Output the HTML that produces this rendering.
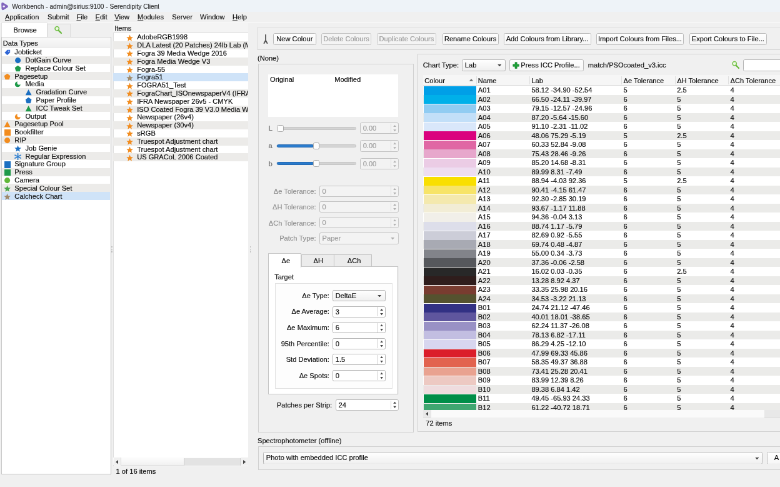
<!DOCTYPE html><html><head><meta charset="utf-8"><title>Workbench</title><style>
*{box-sizing:border-box;margin:0;padding:0}
html,body{width:780px;height:487px;overflow:hidden;background:#f0f0f0}
body{font-family:"Liberation Sans",sans-serif;font-size:11.12px;color:#111;-webkit-text-stroke:0.192px #111;position:relative;line-height:1}
.a{position:absolute;white-space:nowrap}
.t{position:absolute;white-space:nowrap;height:14.4px;line-height:14.4px}
.btn{position:absolute;border:1px solid #bcbcbc;background:linear-gradient(#ffffff,#f6f6f6);border-radius:2.4px;text-align:center;white-space:nowrap;height:18.88px;line-height:17.28px}
.btn.dis{color:#9c9c9c;-webkit-text-stroke-color:#9c9c9c;border-color:#c4c4c4;background:#f4f4f4}
.inp{position:absolute;border:1px solid #b6b6b6;background:#fff;border-radius:2.4px;height:17.6px;line-height:14.4px;padding-left:3.68px;white-space:nowrap}
.inp.dis{color:#a0a0a0;-webkit-text-stroke-color:#a0a0a0;border-color:#c2c2c2;background:#f3f3f3}
.lbl{position:absolute;text-align:right;white-space:nowrap;height:14.4px;line-height:14.4px}
.lbl.dis{color:#909090;-webkit-text-stroke-color:#909090}
.row{position:absolute;left:0;right:0;white-space:nowrap}
u{text-decoration-thickness:0.8px;text-underline-offset:0.96px;text-decoration-color:#666}
</style></head><body><div id="w" style="position:absolute;left:0;top:0;width:1248.0px;height:779.2px;transform:scale(0.625);transform-origin:0 0;will-change:transform;overflow:hidden">
<div class="a" style="left:0;top:0;width:1248px;height:19.52px;background:#eef3f8"></div>
<svg class="a" style="left:-0.16px;top:3.36px" width="13.760" height="13.760" viewBox="0 0 16 16"><path d="M5 3.8 L12.6 8.4 L5.4 12.8 Z" fill="#8166bd" stroke="#8166bd" stroke-width="5" stroke-linejoin="round"/><circle cx="7.2" cy="8.4" r="1.9" fill="#f3f0fa"/></svg>
<div class="a" style="left:19.2px;top:5.76px;font-size:10.16px;color:#454545;letter-spacing:0px">Workbench - admin@sirius:9100 - Serendipity Client</div>
<div class="a" style="left:0;top:19.2px;width:1248px;height:16.64px;background:#f0f0f0;border-bottom:1px solid #fcfcfc"></div>
<div class="t" style="left:8px;top:19.68px"><u>A</u>pplication</div>
<div class="t" style="left:76px;top:19.68px">Submit</div>
<div class="t" style="left:122.4px;top:19.68px"><u>F</u>ile</div>
<div class="t" style="left:152.48px;top:19.68px"><u>E</u>dit</div>
<div class="t" style="left:183.2px;top:19.68px"><u>V</u>iew</div>
<div class="t" style="left:220px;top:19.68px"><u>M</u>odules</div>
<div class="t" style="left:275.2px;top:19.68px">Server</div>
<div class="t" style="left:320px;top:19.68px">Window</div>
<div class="t" style="left:372px;top:19.68px"><u>H</u>elp</div>
<div class="a" style="left:1.6px;top:36px;width:74.4px;height:24.8px;background:#fff;border:1px solid #e2e2e2;border-bottom:none"></div>
<div class="t" style="left:21.6px;top:40.8px">Browse</div>
<div class="a" style="left:75.68px;top:38.08px;width:37.44px;height:21.44px;background:#eeeeee;border:1px solid #dedede;border-bottom:none"></div>
<svg class="a" style="left:85.6px;top:40.8px" width="14.400" height="14.400" viewBox="0 0 18 18"><circle cx="6.5" cy="6" r="4" fill="#eef9e2" stroke="#74c24a" stroke-width="1.9"/><path d="M9.5 9.5 L15 15" stroke="#68ba3c" stroke-width="2.8" stroke-linecap="round"/></svg>
<div class="a" style="left:1.6px;top:58.56px;width:176px;height:700.64px;background:#fff;border:1px solid #d4d4d4;border-right:1.44px solid #b4b4b4;border-bottom:1.28px solid #c0c0c0;border-left:1.28px solid #c8c8c8"></div>
<div class="a" style="left:3.2px;top:60.16px;width:172.8px;height:15.84px;background:linear-gradient(#fafafa,#f0f0f0);border-bottom:1px solid #dcdcdc"></div>
<div class="t" style="left:4.8px;top:61.92px">Data Types</div>
<svg class="a" style="left:5.6px;top:78.24px" width="11.200" height="11.200" viewBox="0 0 16 16"><path d="M2 9 L8 2.5 L14.5 2.5 L14.5 8.5 L8 14.5 Z" fill="#2f66d6"/><circle cx="11.5" cy="5.5" r="1.3" fill="#fff"/></svg>
<div class="t" style="left:23.36px;top:77.12px;height:12.8px;line-height:12.8px">Jobticket</div>
<div class="a" style="left:3.2px;top:89.6px;width:172.8px;height:12.8px;background:#ecebe9"></div>
<svg class="a" style="left:22.72px;top:91.04px" width="11.200" height="11.200" viewBox="0 0 16 16"><circle cx="8" cy="8" r="6.5" fill="#1b6fc2"/></svg>
<div class="t" style="left:40.48px;top:89.92px;height:12.8px;line-height:12.8px">DotGain Curve</div>
<svg class="a" style="left:22.72px;top:103.84px" width="11.200" height="11.200" viewBox="0 0 16 16"><path d="M8 1 L15 6.2 L12.4 14.5 L3.6 14.5 L1 6.2 Z" fill="#1f9a4a"/></svg>
<div class="t" style="left:40.48px;top:102.72px;height:12.8px;line-height:12.8px">Replace Colour Set</div>
<div class="a" style="left:3.2px;top:115.2px;width:172.8px;height:12.8px;background:#ecebe9"></div>
<svg class="a" style="left:5.6px;top:116.64px" width="11.200" height="11.200" viewBox="0 0 16 16"><path d="M8 1 L15 6.2 L12.4 14.5 L3.6 14.5 L1 6.2 Z" fill="#f28c1e"/></svg>
<div class="t" style="left:23.36px;top:115.52px;height:12.8px;line-height:12.8px">Pagesetup</div>
<svg class="a" style="left:22.72px;top:129.44px" width="11.200" height="11.200" viewBox="0 0 16 16"><circle cx="7.5" cy="8.5" r="6.3" fill="#1f9a4a"/><circle cx="10.8" cy="5" r="4.4" fill="#fff"/></svg>
<div class="t" style="left:40.48px;top:128.32px;height:12.8px;line-height:12.8px">Media</div>
<div class="a" style="left:3.2px;top:140.8px;width:172.8px;height:12.8px;background:#ecebe9"></div>
<svg class="a" style="left:39.84px;top:142.24px" width="11.200" height="11.200" viewBox="0 0 16 16"><path d="M8 1.5 L15 14.5 L1 14.5 Z" fill="#1b6fc2"/></svg>
<div class="t" style="left:57.6px;top:141.12px;height:12.8px;line-height:12.8px">Gradation Curve</div>
<svg class="a" style="left:39.84px;top:155.04px" width="11.200" height="11.200" viewBox="0 0 16 16"><path d="M8 1 L15 6.2 L12.4 14.5 L3.6 14.5 L1 6.2 Z" fill="#1b6fc2"/></svg>
<div class="t" style="left:57.6px;top:153.92px;height:12.8px;line-height:12.8px">Paper Profile</div>
<div class="a" style="left:3.2px;top:166.4px;width:172.8px;height:12.8px;background:#ecebe9"></div>
<svg class="a" style="left:39.84px;top:167.84px" width="11.200" height="11.200" viewBox="0 0 16 16"><path d="M8 1.5 L15 14.5 L1 14.5 Z" fill="#1f9a4a"/></svg>
<div class="t" style="left:57.6px;top:166.72px;height:12.8px;line-height:12.8px">ICC Tweak Set</div>
<svg class="a" style="left:22.72px;top:180.64px" width="11.200" height="11.200" viewBox="0 0 16 16"><circle cx="7.5" cy="8.5" r="6.3" fill="#f28c1e"/><circle cx="10.8" cy="5" r="4.4" fill="#fff"/></svg>
<div class="t" style="left:40.48px;top:179.52px;height:12.8px;line-height:12.8px">Output</div>
<div class="a" style="left:3.2px;top:192px;width:172.8px;height:12.8px;background:#ecebe9"></div>
<svg class="a" style="left:5.6px;top:193.44px" width="11.200" height="11.200" viewBox="0 0 16 16"><path d="M8 1.5 L15 14.5 L1 14.5 Z" fill="#f28c1e"/></svg>
<div class="t" style="left:23.36px;top:192.32px;height:12.8px;line-height:12.8px">Pagesetup Pool</div>
<svg class="a" style="left:5.6px;top:206.24px" width="11.200" height="11.200" viewBox="0 0 16 16"><rect x="1.5" y="1.5" width="20.800" height="20.800" fill="#f28c1e"/></svg>
<div class="t" style="left:23.36px;top:205.12px;height:12.8px;line-height:12.8px">Bookfilter</div>
<div class="a" style="left:3.2px;top:217.6px;width:172.8px;height:12.8px;background:#ecebe9"></div>
<svg class="a" style="left:5.6px;top:219.04px" width="11.200" height="11.200" viewBox="0 0 16 16"><circle cx="8" cy="8" r="6.5" fill="#f28c1e"/></svg>
<div class="t" style="left:23.36px;top:217.92px;height:12.8px;line-height:12.8px">RIP</div>
<svg class="a" style="left:22.72px;top:231.84px" width="11.200" height="11.200" viewBox="0 0 16 16"><path d="M8 0.8 L10.1 5.9 L15.6 6.3 L11.4 9.9 L12.7 15.2 L8 12.3 L3.3 15.2 L4.6 9.9 L0.4 6.3 L5.9 5.9 Z" fill="#1b6fc2"/></svg>
<div class="t" style="left:40.48px;top:230.72px;height:12.8px;line-height:12.8px">Job Genie</div>
<div class="a" style="left:3.2px;top:243.2px;width:172.8px;height:12.8px;background:#ecebe9"></div>
<svg class="a" style="left:22.72px;top:244.64px" width="11.200" height="11.200" viewBox="0 0 16 16"><path d="M8 1 V15 M1.5 4.5 L14.5 11.5 M1.5 11.5 L14.5 4.5" stroke="#2e7fd0" stroke-width="2.4" stroke-linecap="round" fill="none"/></svg>
<div class="t" style="left:40.48px;top:243.52px;height:12.8px;line-height:12.8px">Regular Expression</div>
<svg class="a" style="left:5.6px;top:257.44px" width="11.200" height="11.200" viewBox="0 0 16 16"><rect x="1.5" y="1.5" width="20.800" height="20.800" fill="#1b6fc2"/></svg>
<div class="t" style="left:23.36px;top:256.32px;height:12.8px;line-height:12.8px">Signature Group</div>
<div class="a" style="left:3.2px;top:268.8px;width:172.8px;height:12.8px;background:#ecebe9"></div>
<svg class="a" style="left:5.6px;top:270.24px" width="11.200" height="11.200" viewBox="0 0 16 16"><rect x="1.5" y="1.5" width="20.800" height="20.800" fill="#1f9a4a"/></svg>
<div class="t" style="left:23.36px;top:269.12px;height:12.8px;line-height:12.8px">Press</div>
<svg class="a" style="left:5.6px;top:283.04px" width="11.200" height="11.200" viewBox="0 0 16 16"><circle cx="8" cy="8" r="6.5" fill="#62b83a"/></svg>
<div class="t" style="left:23.36px;top:281.92px;height:12.8px;line-height:12.8px">Camera</div>
<div class="a" style="left:3.2px;top:294.4px;width:172.8px;height:12.8px;background:#ecebe9"></div>
<svg class="a" style="left:5.6px;top:295.84px" width="11.200" height="11.200" viewBox="0 0 16 16"><path d="M8 0.8 L10.1 5.9 L15.6 6.3 L11.4 9.9 L12.7 15.2 L8 12.3 L3.3 15.2 L4.6 9.9 L0.4 6.3 L5.9 5.9 Z" fill="#4aa64a"/></svg>
<div class="t" style="left:23.36px;top:294.72px;height:12.8px;line-height:12.8px">Special Colour Set</div>
<div class="a" style="left:3.2px;top:307.2px;width:172.8px;height:12.8px;background:#cfe3f8"></div>
<svg class="a" style="left:5.6px;top:308.64px" width="11.200" height="11.200" viewBox="0 0 16 16"><path d="M8 0.8 L10.1 5.9 L15.6 6.3 L11.4 9.9 L12.7 15.2 L8 12.3 L3.3 15.2 L4.6 9.9 L0.4 6.3 L5.9 5.9 Z" fill="#a08a6a"/></svg>
<div class="t" style="left:23.36px;top:307.52px;height:12.8px;line-height:12.8px">Calcheck Chart</div>
<div class="a" style="left:178.4px;top:393.6px;width:1.28px;height:1.28px;background:#c4c4c4"></div>
<div class="a" style="left:400.32px;top:393.6px;width:1.28px;height:1.28px;background:#c8c8c8"></div>
<div class="a" style="left:178.4px;top:396.16px;width:1.28px;height:1.28px;background:#c4c4c4"></div>
<div class="a" style="left:400.32px;top:396.16px;width:1.28px;height:1.28px;background:#c8c8c8"></div>
<div class="a" style="left:178.4px;top:398.72px;width:1.28px;height:1.28px;background:#c4c4c4"></div>
<div class="a" style="left:400.32px;top:398.72px;width:1.28px;height:1.28px;background:#c8c8c8"></div>
<div class="a" style="left:178.4px;top:401.28px;width:1.28px;height:1.28px;background:#c4c4c4"></div>
<div class="a" style="left:400.32px;top:401.28px;width:1.28px;height:1.28px;background:#c8c8c8"></div>
<div class="a" style="left:178.4px;top:403.84px;width:1.28px;height:1.28px;background:#c4c4c4"></div>
<div class="a" style="left:400.32px;top:403.84px;width:1.28px;height:1.28px;background:#c8c8c8"></div>
<div class="a" style="left:180.8px;top:36.8px;width:216px;height:708.8px;background:#fff;border-left:1px solid #e0e0e0"></div>
<div class="a" style="left:180.8px;top:36.8px;width:216px;height:16px;background:#f4f4f4;border-bottom:1px solid #dcdcdc"></div>
<div class="t" style="left:183.2px;top:38.24px">Items</div>
<div class="a" style="left:180.8px;top:53.44px;width:216px;height:208px;overflow:hidden">
<svg class="a" style="left:21.6px;top:1.28px" width="11.200" height="11.200" viewBox="0 0 16 16"><path d="M8 0.8 L10.1 5.9 L15.6 6.3 L11.4 9.9 L12.7 15.2 L8 12.3 L3.3 15.2 L4.6 9.9 L0.4 6.3 L5.9 5.9 Z" fill="#f28c1e"/></svg>
<div class="t" style="left:38.4px;top:0px;height:12.8px;line-height:12.8px">AdobeRGB1998</div>
<div class="a" style="left:0;top:12.8px;width:216px;height:12.8px;background:#ecebe9"></div>
<svg class="a" style="left:21.6px;top:14.08px" width="11.200" height="11.200" viewBox="0 0 16 16"><path d="M8 0.8 L10.1 5.9 L15.6 6.3 L11.4 9.9 L12.7 15.2 L8 12.3 L3.3 15.2 L4.6 9.9 L0.4 6.3 L5.9 5.9 Z" fill="#f28c1e"/></svg>
<div class="t" style="left:38.4px;top:12.8px;height:12.8px;line-height:12.8px">DLA Latest (20 Patches) 24lb Lab (M1)</div>
<svg class="a" style="left:21.6px;top:26.88px" width="11.200" height="11.200" viewBox="0 0 16 16"><path d="M8 0.8 L10.1 5.9 L15.6 6.3 L11.4 9.9 L12.7 15.2 L8 12.3 L3.3 15.2 L4.6 9.9 L0.4 6.3 L5.9 5.9 Z" fill="#f28c1e"/></svg>
<div class="t" style="left:38.4px;top:25.6px;height:12.8px;line-height:12.8px">Fogra 39 Media Wedge 2016</div>
<div class="a" style="left:0;top:38.4px;width:216px;height:12.8px;background:#ecebe9"></div>
<svg class="a" style="left:21.6px;top:39.68px" width="11.200" height="11.200" viewBox="0 0 16 16"><path d="M8 0.8 L10.1 5.9 L15.6 6.3 L11.4 9.9 L12.7 15.2 L8 12.3 L3.3 15.2 L4.6 9.9 L0.4 6.3 L5.9 5.9 Z" fill="#f28c1e"/></svg>
<div class="t" style="left:38.4px;top:38.4px;height:12.8px;line-height:12.8px">Fogra Media Wedge V3</div>
<svg class="a" style="left:21.6px;top:52.48px" width="11.200" height="11.200" viewBox="0 0 16 16"><path d="M8 0.8 L10.1 5.9 L15.6 6.3 L11.4 9.9 L12.7 15.2 L8 12.3 L3.3 15.2 L4.6 9.9 L0.4 6.3 L5.9 5.9 Z" fill="#f28c1e"/></svg>
<div class="t" style="left:38.4px;top:51.2px;height:12.8px;line-height:12.8px">Fogra-55</div>
<div class="a" style="left:0;top:64px;width:216px;height:12.8px;background:#cfe3f8"></div>
<svg class="a" style="left:21.6px;top:65.28px" width="11.200" height="11.200" viewBox="0 0 16 16"><path d="M8 0.8 L10.1 5.9 L15.6 6.3 L11.4 9.9 L12.7 15.2 L8 12.3 L3.3 15.2 L4.6 9.9 L0.4 6.3 L5.9 5.9 Z" fill="#a08a6a"/></svg>
<div class="t" style="left:38.4px;top:64px;height:12.8px;line-height:12.8px">Fogra51</div>
<svg class="a" style="left:21.6px;top:78.08px" width="11.200" height="11.200" viewBox="0 0 16 16"><path d="M8 0.8 L10.1 5.9 L15.6 6.3 L11.4 9.9 L12.7 15.2 L8 12.3 L3.3 15.2 L4.6 9.9 L0.4 6.3 L5.9 5.9 Z" fill="#f28c1e"/></svg>
<div class="t" style="left:38.4px;top:76.8px;height:12.8px;line-height:12.8px">FOGRA51_Test</div>
<div class="a" style="left:0;top:89.6px;width:216px;height:12.8px;background:#ecebe9"></div>
<svg class="a" style="left:21.6px;top:90.88px" width="11.200" height="11.200" viewBox="0 0 16 16"><path d="M8 0.8 L10.1 5.9 L15.6 6.3 L11.4 9.9 L12.7 15.2 L8 12.3 L3.3 15.2 L4.6 9.9 L0.4 6.3 L5.9 5.9 Z" fill="#f28c1e"/></svg>
<div class="t" style="left:38.4px;top:89.6px;height:12.8px;line-height:12.8px">FograChart_ISOnewspaperV4 (IFRA26)</div>
<svg class="a" style="left:21.6px;top:103.68px" width="11.200" height="11.200" viewBox="0 0 16 16"><path d="M8 0.8 L10.1 5.9 L15.6 6.3 L11.4 9.9 L12.7 15.2 L8 12.3 L3.3 15.2 L4.6 9.9 L0.4 6.3 L5.9 5.9 Z" fill="#f28c1e"/></svg>
<div class="t" style="left:38.4px;top:102.4px;height:12.8px;line-height:12.8px">IFRA Newspaper 26v5 - CMYK</div>
<div class="a" style="left:0;top:115.2px;width:216px;height:12.8px;background:#ecebe9"></div>
<svg class="a" style="left:21.6px;top:116.48px" width="11.200" height="11.200" viewBox="0 0 16 16"><path d="M8 0.8 L10.1 5.9 L15.6 6.3 L11.4 9.9 L12.7 15.2 L8 12.3 L3.3 15.2 L4.6 9.9 L0.4 6.3 L5.9 5.9 Z" fill="#f28c1e"/></svg>
<div class="t" style="left:38.4px;top:115.2px;height:12.8px;line-height:12.8px">ISO Coated Fogra 39 V3.0 Media Wedge</div>
<svg class="a" style="left:21.6px;top:129.28px" width="11.200" height="11.200" viewBox="0 0 16 16"><path d="M8 0.8 L10.1 5.9 L15.6 6.3 L11.4 9.9 L12.7 15.2 L8 12.3 L3.3 15.2 L4.6 9.9 L0.4 6.3 L5.9 5.9 Z" fill="#f28c1e"/></svg>
<div class="t" style="left:38.4px;top:128px;height:12.8px;line-height:12.8px">Newspaper (26v4)</div>
<div class="a" style="left:0;top:140.8px;width:216px;height:12.8px;background:#ecebe9"></div>
<svg class="a" style="left:21.6px;top:142.08px" width="11.200" height="11.200" viewBox="0 0 16 16"><path d="M8 0.8 L10.1 5.9 L15.6 6.3 L11.4 9.9 L12.7 15.2 L8 12.3 L3.3 15.2 L4.6 9.9 L0.4 6.3 L5.9 5.9 Z" fill="#f28c1e"/></svg>
<div class="t" style="left:38.4px;top:140.8px;height:12.8px;line-height:12.8px">Newspaper (30v4)</div>
<svg class="a" style="left:21.6px;top:154.88px" width="11.200" height="11.200" viewBox="0 0 16 16"><path d="M8 0.8 L10.1 5.9 L15.6 6.3 L11.4 9.9 L12.7 15.2 L8 12.3 L3.3 15.2 L4.6 9.9 L0.4 6.3 L5.9 5.9 Z" fill="#f28c1e"/></svg>
<div class="t" style="left:38.4px;top:153.6px;height:12.8px;line-height:12.8px">sRGB</div>
<div class="a" style="left:0;top:166.4px;width:216px;height:12.8px;background:#ecebe9"></div>
<svg class="a" style="left:21.6px;top:167.68px" width="11.200" height="11.200" viewBox="0 0 16 16"><path d="M8 0.8 L10.1 5.9 L15.6 6.3 L11.4 9.9 L12.7 15.2 L8 12.3 L3.3 15.2 L4.6 9.9 L0.4 6.3 L5.9 5.9 Z" fill="#f28c1e"/></svg>
<div class="t" style="left:38.4px;top:166.4px;height:12.8px;line-height:12.8px">Truespot Adjustment chart</div>
<svg class="a" style="left:21.6px;top:180.48px" width="11.200" height="11.200" viewBox="0 0 16 16"><path d="M8 0.8 L10.1 5.9 L15.6 6.3 L11.4 9.9 L12.7 15.2 L8 12.3 L3.3 15.2 L4.6 9.9 L0.4 6.3 L5.9 5.9 Z" fill="#f28c1e"/></svg>
<div class="t" style="left:38.4px;top:179.2px;height:12.8px;line-height:12.8px">Truespot Adjustment chart</div>
<div class="a" style="left:0;top:192px;width:216px;height:12.8px;background:#ecebe9"></div>
<svg class="a" style="left:21.6px;top:193.28px" width="11.200" height="11.200" viewBox="0 0 16 16"><path d="M8 0.8 L10.1 5.9 L15.6 6.3 L11.4 9.9 L12.7 15.2 L8 12.3 L3.3 15.2 L4.6 9.9 L0.4 6.3 L5.9 5.9 Z" fill="#f28c1e"/></svg>
<div class="t" style="left:38.4px;top:192px;height:12.8px;line-height:12.8px">US GRACoL 2006 Coated</div>
</div>
<div class="a" style="left:180.8px;top:732.48px;width:216px;height:12.8px;background:linear-gradient(#fdfdfd,#f2f2f2);border-bottom:1px solid #dcdcdc"></div>
<div class="a" style="left:294.4px;top:732.8px;width:90.24px;height:12.16px;background:#e3e3e3;border-left:1px solid #cfcfcf;border-right:1px solid #cfcfcf"></div>
<div class="a" style="left:181.6px;top:732.48px;width:12px;height:12.8px;background:#f0f0f0;border-right:1px solid #d8d8d8"></div>
<div class="a" style="left:384.8px;top:732.48px;width:12px;height:12.8px;background:#f0f0f0"></div>
<svg class="a" style="left:184.96px;top:735.68px" width="4.160" height="6.400" viewBox="0 0 2.6 4"><path d="M2.6 0 L0 2 L2.6 4 Z" fill="#444"/></svg>
<svg class="a" style="left:388.8px;top:735.68px" width="4.160" height="6.400" viewBox="0 0 2.6 4"><path d="M0 0 L2.6 2 L0 4 Z" fill="#444"/></svg>
<div class="t" style="left:185.6px;top:747.2px">1 of 16 items</div>
<div class="a" style="left:410.88px;top:42.88px;width:849.6px;height:37.44px;border:1px solid #dedede;border-bottom-color:#d4d4d4;border-radius:1.6px;background:#f0f0f0"></div>
<svg class="a" style="left:421.12px;top:54.72px" width="8.000" height="15.040" viewBox="0 0 10 19"><path d="M5 1 V13.5 M5 12 L1.8 18 M5 12 L8.2 18" stroke="#555" stroke-width="2.3" fill="none" stroke-linecap="round"/></svg>
<div class="btn" style="left:437.12px;top:52.8px;width:68.48px">New Colour</div>
<div class="btn dis" style="left:513.6px;top:52.8px;width:80.8px">Delete Colours</div>
<div class="btn dis" style="left:603.2px;top:52.8px;width:94.4px">Duplicate Colours</div>
<div class="btn" style="left:707.52px;top:52.8px;width:90.08px">Rename Colours</div>
<div class="btn" style="left:805.6px;top:52.8px;width:140px">Add Colours from Library...</div>
<div class="btn" style="left:953.92px;top:52.8px;width:140.16px">Import Colours from Files...</div>
<div class="btn" style="left:1102.88px;top:52.8px;width:124px">Export Colours to File...</div>
<div class="t" style="left:412px;top:85.6px">(None)</div>
<div class="a" style="left:412.96px;top:101.92px;width:249.44px;height:589.76px;border:1px solid #d0d0d0"></div>
<div class="a" style="left:428.8px;top:119.04px;width:208.32px;height:68.16px;background:#fff"></div>
<div class="t" style="left:432px;top:120px">Original</div>
<div class="t" style="left:535.2px;top:120px">Modified</div>
<div class="t" style="left:429.6px;top:198.08px;color:#8a8a8a">L</div>
<div class="a" style="left:443.2px;top:202.88px;width:126.4px;height:4.8px;background:#d4d4d4;border:1px solid #c4c4c4;border-radius:2.4px"></div>
<div class="a" style="left:443.2px;top:199.68px;width:10.56px;height:11.2px;background:#fdfdfd;border:1px solid #aaa;border-radius:2.4px"></div>
<div class="inp dis" style="left:576px;top:196.16px;width:61.76px;height:18.24px;line-height:16.64px">0.00</div><div class="a" style="left:624.96px;top:197.76px;width:0;height:15.04px;border-left:1px solid #dcdcdc"></div><svg class="a" style="left:625.76px;top:196.16px" width="11.200" height="18.240" viewBox="0 0 7 11.4"><path d="M2 4.4 L3.5 2.5 L5 4.4 Z M2 7.0 L3.5 8.9 L5 7.0 Z" fill="#b0b0b0"/></svg>
<div class="t" style="left:429.6px;top:226.32px;color:#8a8a8a">a</div>
<div class="a" style="left:443.2px;top:231.12px;width:126.4px;height:4.8px;background:#d4d4d4;border:1px solid #c4c4c4;border-radius:2.4px"></div>
<div class="a" style="left:443.2px;top:231.12px;width:58.4px;height:4.8px;background:#2a7bcc;border:1px solid #2468b0;border-radius:2.4px"></div>
<div class="a" style="left:500.8px;top:227.92px;width:10.56px;height:11.2px;background:#fdfdfd;border:1px solid #aaa;border-radius:2.4px"></div>
<div class="inp dis" style="left:576px;top:224.4px;width:61.76px;height:18.24px;line-height:16.64px">0.00</div><div class="a" style="left:624.96px;top:226px;width:0;height:15.04px;border-left:1px solid #dcdcdc"></div><svg class="a" style="left:625.76px;top:224.4px" width="11.200" height="18.240" viewBox="0 0 7 11.4"><path d="M2 4.4 L3.5 2.5 L5 4.4 Z M2 7.0 L3.5 8.9 L5 7.0 Z" fill="#b0b0b0"/></svg>
<div class="t" style="left:429.6px;top:254.56px;color:#8a8a8a">b</div>
<div class="a" style="left:443.2px;top:259.36px;width:126.4px;height:4.8px;background:#d4d4d4;border:1px solid #c4c4c4;border-radius:2.4px"></div>
<div class="a" style="left:443.2px;top:259.36px;width:58.4px;height:4.8px;background:#2a7bcc;border:1px solid #2468b0;border-radius:2.4px"></div>
<div class="a" style="left:500.8px;top:256.16px;width:10.56px;height:11.2px;background:#fdfdfd;border:1px solid #aaa;border-radius:2.4px"></div>
<div class="inp dis" style="left:576px;top:252.64px;width:61.76px;height:18.24px;line-height:16.64px">0.00</div><div class="a" style="left:624.96px;top:254.24px;width:0;height:15.04px;border-left:1px solid #dcdcdc"></div><svg class="a" style="left:625.76px;top:252.64px" width="11.200" height="18.240" viewBox="0 0 7 11.4"><path d="M2 4.4 L3.5 2.5 L5 4.4 Z M2 7.0 L3.5 8.9 L5 7.0 Z" fill="#b0b0b0"/></svg>
<div class="lbl dis" style="left:409.6px;width:96px;top:298.88px">&Delta;e Tolerance:</div>
<div class="inp dis" style="left:510.88px;top:296.64px;width:127.04px;height:18.08px;line-height:16.48px">0</div><div class="a" style="left:625.12px;top:298.24px;width:0;height:14.88px;border-left:1px solid #dcdcdc"></div><svg class="a" style="left:625.92px;top:296.64px" width="11.200" height="18.080" viewBox="0 0 7 11.3"><path d="M2 4.3500000000000005 L3.5 2.45 L5 4.3500000000000005 Z M2 6.95 L3.5 8.850000000000001 L5 6.95 Z" fill="#b0b0b0"/></svg>
<div class="lbl dis" style="left:409.6px;width:96px;top:324.24px">&Delta;H Tolerance:</div>
<div class="inp dis" style="left:510.88px;top:322px;width:127.04px;height:18.08px;line-height:16.48px">0</div><div class="a" style="left:625.12px;top:323.6px;width:0;height:14.88px;border-left:1px solid #dcdcdc"></div><svg class="a" style="left:625.92px;top:322px" width="11.200" height="18.080" viewBox="0 0 7 11.3"><path d="M2 4.3500000000000005 L3.5 2.45 L5 4.3500000000000005 Z M2 6.95 L3.5 8.850000000000001 L5 6.95 Z" fill="#b0b0b0"/></svg>
<div class="lbl dis" style="left:409.6px;width:96px;top:349.6px">&Delta;Ch Tolerance:</div>
<div class="inp dis" style="left:510.88px;top:347.36px;width:127.04px;height:18.08px;line-height:16.48px">0</div><div class="a" style="left:625.12px;top:348.96px;width:0;height:14.88px;border-left:1px solid #dcdcdc"></div><svg class="a" style="left:625.92px;top:347.36px" width="11.200" height="18.080" viewBox="0 0 7 11.3"><path d="M2 4.3500000000000005 L3.5 2.45 L5 4.3500000000000005 Z M2 6.95 L3.5 8.850000000000001 L5 6.95 Z" fill="#b0b0b0"/></svg>
<div class="lbl dis" style="left:409.6px;width:96px;top:374.4px">Patch Type:</div>
<div class="inp dis" style="left:510.88px;top:372.16px;width:127.04px;height:18.88px;line-height:17.28px;background:#f3f3f3">Paper</div><svg class="a" style="left:625.12px;top:380.16px" width="6.400" height="3.520" viewBox="0 0 5 3"><path d="M0 0 H5 L2.5 3 Z" fill="#b0b0b0"/></svg>
<div class="a" style="left:481.6px;top:407.2px;width:53.6px;height:20.8px;background:#ececec;border:1px solid #c4c4c4"></div>
<div class="a" style="left:534.4px;top:407.2px;width:60.8px;height:20.8px;background:#ececec;border:1px solid #c4c4c4"></div>
<div class="a" style="left:429.28px;top:426.4px;width:207.68px;height:204.32px;background:#fff;border:1px solid #c4c4c4"></div>
<div class="a" style="left:429.28px;top:405.28px;width:52.8px;height:23.2px;background:#fff;border:1px solid #c4c4c4;border-bottom:none"></div>
<div class="t" style="left:430.88px;width:52.8px;text-align:center;top:409.6px">&Delta;e</div>
<div class="t" style="left:482.56px;width:53.6px;text-align:center;top:410.4px">&Delta;H</div>
<div class="t" style="left:536.64px;width:60px;text-align:center;top:410.4px">&Delta;Ch</div>
<div class="t" style="left:439.2px;top:435.52px">Target</div>
<div class="a" style="left:440px;top:453.12px;width:188.16px;height:168.48px;border:1px solid #e2e2e2;background:#fdfdfd"></div>
<div class="lbl" style="left:432px;width:94.88px;top:465.76px">&Delta;e Type:</div>
<div class="inp" style="left:532.16px;top:463.52px;width:84.8px;height:18.88px;line-height:17.28px;background:linear-gradient(#ffffff,#f0f0f0)">DeltaE</div><svg class="a" style="left:604.16px;top:471.52px" width="6.400" height="3.520" viewBox="0 0 5 3"><path d="M0 0 H5 L2.5 3 Z" fill="#444"/></svg>
<div class="lbl" style="left:432px;width:94.88px;top:491.36px">&Delta;e Average:</div>
<div class="inp" style="left:532.16px;top:489.6px;width:84.8px;height:18.08px;line-height:16.48px">3</div><div class="a" style="left:604.16px;top:491.2px;width:0;height:14.88px;border-left:1px solid #d0d0d0"></div><svg class="a" style="left:604.96px;top:489.6px" width="11.200" height="18.080" viewBox="0 0 7 11.3"><path d="M2 4.3500000000000005 L3.5 2.45 L5 4.3500000000000005 Z M2 6.95 L3.5 8.850000000000001 L5 6.95 Z" fill="#444"/></svg>
<div class="lbl" style="left:432px;width:94.88px;top:516.96px">&Delta;e Maximum:</div>
<div class="inp" style="left:532.16px;top:515.2px;width:84.8px;height:18.08px;line-height:16.48px">6</div><div class="a" style="left:604.16px;top:516.8px;width:0;height:14.88px;border-left:1px solid #d0d0d0"></div><svg class="a" style="left:604.96px;top:515.2px" width="11.200" height="18.080" viewBox="0 0 7 11.3"><path d="M2 4.3500000000000005 L3.5 2.45 L5 4.3500000000000005 Z M2 6.95 L3.5 8.850000000000001 L5 6.95 Z" fill="#444"/></svg>
<div class="lbl" style="left:432px;width:94.88px;top:542.56px">95th Percentile:</div>
<div class="inp" style="left:532.16px;top:540.8px;width:84.8px;height:18.08px;line-height:16.48px">0</div><div class="a" style="left:604.16px;top:542.4px;width:0;height:14.88px;border-left:1px solid #d0d0d0"></div><svg class="a" style="left:604.96px;top:540.8px" width="11.200" height="18.080" viewBox="0 0 7 11.3"><path d="M2 4.3500000000000005 L3.5 2.45 L5 4.3500000000000005 Z M2 6.95 L3.5 8.850000000000001 L5 6.95 Z" fill="#444"/></svg>
<div class="lbl" style="left:432px;width:94.88px;top:568.16px">Std Deviation:</div>
<div class="inp" style="left:532.16px;top:566.4px;width:84.8px;height:18.08px;line-height:16.48px">1.5</div><div class="a" style="left:604.16px;top:568px;width:0;height:14.88px;border-left:1px solid #d0d0d0"></div><svg class="a" style="left:604.96px;top:566.4px" width="11.200" height="18.080" viewBox="0 0 7 11.3"><path d="M2 4.3500000000000005 L3.5 2.45 L5 4.3500000000000005 Z M2 6.95 L3.5 8.850000000000001 L5 6.95 Z" fill="#444"/></svg>
<div class="lbl" style="left:432px;width:94.88px;top:593.76px">&Delta;e Spots:</div>
<div class="inp" style="left:532.16px;top:592px;width:84.8px;height:18.08px;line-height:16.48px">0</div><div class="a" style="left:604.16px;top:593.6px;width:0;height:14.88px;border-left:1px solid #d0d0d0"></div><svg class="a" style="left:604.96px;top:592px" width="11.200" height="18.080" viewBox="0 0 7 11.3"><path d="M2 4.3500000000000005 L3.5 2.45 L5 4.3500000000000005 Z M2 6.95 L3.5 8.850000000000001 L5 6.95 Z" fill="#444"/></svg>
<div class="lbl" style="left:419.2px;width:112px;top:640.64px">Patches per Strip:</div>
<div class="inp" style="left:536.8px;top:639.04px;width:101.12px;height:17.6px;line-height:16px">24</div><div class="a" style="left:625.12px;top:640.64px;width:0;height:14.4px;border-left:1px solid #d0d0d0"></div><svg class="a" style="left:625.92px;top:639.04px" width="11.200" height="17.600" viewBox="0 0 7 11"><path d="M2 4.2 L3.5 2.3 L5 4.2 Z M2 6.8 L3.5 8.7 L5 6.8 Z" fill="#444"/></svg>
<div class="t" style="left:412px;top:697.6px">Spectrophotometer (offline)</div>
<div class="a" style="left:412.8px;top:714.4px;width:848px;height:37.6px;border:1px solid #d0d0d0"></div>
<div class="inp" style="left:421.12px;top:723.2px;width:799.36px;height:19.52px;line-height:17.92px;background:linear-gradient(#ffffff,#f0f0f0)">Photo with embedded ICC profile</div><svg class="a" style="left:1207.68px;top:731.52px" width="6.400" height="3.520" viewBox="0 0 5 3"><path d="M0 0 H5 L2.5 3 Z" fill="#444"/></svg>
<div class="btn" style="left:1226.56px;top:723.2px;width:48px;height:19.52px;line-height:16.32px;text-align:left;padding-left:11.2px">A</div>
<div class="a" style="left:668.16px;top:85.76px;width:592px;height:605.12px;border:1px solid #d0d0d0"></div>
<div class="t" style="left:676.8px;top:96.96px">Chart Type:</div>
<div class="inp" style="left:739.2px;top:94.88px;width:69.6px;height:18.72px;line-height:17.12px;background:linear-gradient(#ffffff,#f0f0f0)">Lab</div><svg class="a" style="left:796px;top:102.8px" width="6.400" height="3.520" viewBox="0 0 5 3"><path d="M0 0 H5 L2.5 3 Z" fill="#444"/></svg>
<div class="btn" style="left:814.72px;top:94.88px;width:119.36px;height:18.72px;line-height:16.48px;text-align:left;padding-left:17.6px">Press ICC Profile...</div>
<svg class="a" style="left:819.68px;top:98.88px" width="11.200" height="11.200" viewBox="0 0 14 14"><path d="M5 1 H9 V5 H13 V9 H9 V13 H5 V9 H1 V5 H5 Z" fill="#1fa33a" stroke="#0f7a25" stroke-width="0.8"/></svg>
<div class="t" style="left:940.8px;top:96.96px">match/PSOcoated_v3.icc</div>
<svg class="a" style="left:1169.6px;top:96.8px" width="14.400" height="14.400" viewBox="0 0 18 18"><circle cx="6.5" cy="6" r="4" fill="#eef9e2" stroke="#74c24a" stroke-width="1.9"/><path d="M9.5 9.5 L15 15" stroke="#68ba3c" stroke-width="2.8" stroke-linecap="round"/></svg>
<div class="inp" style="left:1188.8px;top:94.88px;width:80px;height:18.72px"></div>
<div class="a" style="left:676.8px;top:120px;width:576px;height:547.68px;background:#fff;overflow:hidden">
<div class="a" style="left:0;top:0;width:576px;height:16.64px;background:#f6f6f6;border-bottom:1px solid #dcdcdc"></div>
<div class="t" style="left:2.4px;top:1.6px">Colour</div>
<div class="t" style="left:88px;top:1.6px">Name</div>
<div class="t" style="left:173.6px;top:1.6px">Lab</div>
<div class="t" style="left:320.8px;top:1.6px">&Delta;e Tolerance</div>
<div class="t" style="left:406.4px;top:1.6px">&Delta;H Tolerance</div>
<div class="t" style="left:491.68px;top:1.6px">&Delta;Ch Tolerance</div>
<div class="a" style="left:85.28px;top:1.6px;width:0;height:13.44px;border-left:1px solid #e0e0e0"></div>
<div class="a" style="left:170.4px;top:1.6px;width:0;height:13.44px;border-left:1px solid #e0e0e0"></div>
<div class="a" style="left:317.6px;top:1.6px;width:0;height:13.44px;border-left:1px solid #e0e0e0"></div>
<div class="a" style="left:403.2px;top:1.6px;width:0;height:13.44px;border-left:1px solid #e0e0e0"></div>
<div class="a" style="left:488.48px;top:1.6px;width:0;height:13.44px;border-left:1px solid #e0e0e0"></div>
<svg class="a" style="left:73.6px;top:5.76px" width="8.000" height="4.480" viewBox="0 0 4 2.4"><path d="M0 2.4 L2 0 L4 2.4 Z" fill="#777"/></svg>
<div class="a" style="left:1.6px;top:17.84px;width:83.68px;height:13.706px;background:#009fe7"></div>
<div class="t" style="left:88px;top:17.2px;height:14.506px;line-height:14.506px">A01</div>
<div class="t" style="left:173.6px;top:17.2px;height:14.506px;line-height:14.506px">58.12 -34.90 -52.54</div>
<div class="t" style="left:320.8px;top:17.2px;height:14.506px;line-height:14.506px">5</div>
<div class="t" style="left:406.4px;top:17.2px;height:14.506px;line-height:14.506px">2.5</div>
<div class="t" style="left:491.68px;top:17.2px;height:14.506px;line-height:14.506px">4</div>
<div class="a" style="left:0;top:31.706px;width:576px;height:14.506px;background:#ebebe9"></div>
<div class="a" style="left:1.6px;top:32.346px;width:83.68px;height:13.706px;background:#00b0e9"></div>
<div class="t" style="left:88px;top:31.706px;height:14.506px;line-height:14.506px">A02</div>
<div class="t" style="left:173.6px;top:31.706px;height:14.506px;line-height:14.506px">66.50 -24.11 -39.97</div>
<div class="t" style="left:320.8px;top:31.706px;height:14.506px;line-height:14.506px">6</div>
<div class="t" style="left:406.4px;top:31.706px;height:14.506px;line-height:14.506px">5</div>
<div class="t" style="left:491.68px;top:31.706px;height:14.506px;line-height:14.506px">4</div>
<div class="a" style="left:1.6px;top:46.851px;width:83.68px;height:13.706px;background:#91ccf2"></div>
<div class="t" style="left:88px;top:46.211px;height:14.506px;line-height:14.506px">A03</div>
<div class="t" style="left:173.6px;top:46.211px;height:14.506px;line-height:14.506px">79.15 -12.57 -24.96</div>
<div class="t" style="left:320.8px;top:46.211px;height:14.506px;line-height:14.506px">6</div>
<div class="t" style="left:406.4px;top:46.211px;height:14.506px;line-height:14.506px">5</div>
<div class="t" style="left:491.68px;top:46.211px;height:14.506px;line-height:14.506px">4</div>
<div class="a" style="left:0;top:60.717px;width:576px;height:14.506px;background:#ebebe9"></div>
<div class="a" style="left:1.6px;top:61.357px;width:83.68px;height:13.706px;background:#c2dff8"></div>
<div class="t" style="left:88px;top:60.717px;height:14.506px;line-height:14.506px">A04</div>
<div class="t" style="left:173.6px;top:60.717px;height:14.506px;line-height:14.506px">87.20 -5.64 -15.60</div>
<div class="t" style="left:320.8px;top:60.717px;height:14.506px;line-height:14.506px">6</div>
<div class="t" style="left:406.4px;top:60.717px;height:14.506px;line-height:14.506px">5</div>
<div class="t" style="left:491.68px;top:60.717px;height:14.506px;line-height:14.506px">4</div>
<div class="a" style="left:1.6px;top:75.862px;width:83.68px;height:13.706px;background:#d9e7fa"></div>
<div class="t" style="left:88px;top:75.222px;height:14.506px;line-height:14.506px">A05</div>
<div class="t" style="left:173.6px;top:75.222px;height:14.506px;line-height:14.506px">91.10 -2.31 -11.02</div>
<div class="t" style="left:320.8px;top:75.222px;height:14.506px;line-height:14.506px">6</div>
<div class="t" style="left:406.4px;top:75.222px;height:14.506px;line-height:14.506px">5</div>
<div class="t" style="left:491.68px;top:75.222px;height:14.506px;line-height:14.506px">4</div>
<div class="a" style="left:0;top:89.728px;width:576px;height:14.506px;background:#ebebe9"></div>
<div class="a" style="left:1.6px;top:90.368px;width:83.68px;height:13.706px;background:#da017e"></div>
<div class="t" style="left:88px;top:89.728px;height:14.506px;line-height:14.506px">A06</div>
<div class="t" style="left:173.6px;top:89.728px;height:14.506px;line-height:14.506px">48.06 75.29 -5.19</div>
<div class="t" style="left:320.8px;top:89.728px;height:14.506px;line-height:14.506px">5</div>
<div class="t" style="left:406.4px;top:89.728px;height:14.506px;line-height:14.506px">2.5</div>
<div class="t" style="left:491.68px;top:89.728px;height:14.506px;line-height:14.506px">4</div>
<div class="a" style="left:1.6px;top:104.874px;width:83.68px;height:13.706px;background:#e067a4"></div>
<div class="t" style="left:88px;top:104.234px;height:14.506px;line-height:14.506px">A07</div>
<div class="t" style="left:173.6px;top:104.234px;height:14.506px;line-height:14.506px">60.33 52.84 -9.08</div>
<div class="t" style="left:320.8px;top:104.234px;height:14.506px;line-height:14.506px">6</div>
<div class="t" style="left:406.4px;top:104.234px;height:14.506px;line-height:14.506px">5</div>
<div class="t" style="left:491.68px;top:104.234px;height:14.506px;line-height:14.506px">4</div>
<div class="a" style="left:0;top:118.739px;width:576px;height:14.506px;background:#ebebe9"></div>
<div class="a" style="left:1.6px;top:119.379px;width:83.68px;height:13.706px;background:#e7a7cc"></div>
<div class="t" style="left:88px;top:118.739px;height:14.506px;line-height:14.506px">A08</div>
<div class="t" style="left:173.6px;top:118.739px;height:14.506px;line-height:14.506px">75.43 28.46 -9.26</div>
<div class="t" style="left:320.8px;top:118.739px;height:14.506px;line-height:14.506px">6</div>
<div class="t" style="left:406.4px;top:118.739px;height:14.506px;line-height:14.506px">5</div>
<div class="t" style="left:491.68px;top:118.739px;height:14.506px;line-height:14.506px">4</div>
<div class="a" style="left:1.6px;top:133.885px;width:83.68px;height:13.706px;background:#ebcce5"></div>
<div class="t" style="left:88px;top:133.245px;height:14.506px;line-height:14.506px">A09</div>
<div class="t" style="left:173.6px;top:133.245px;height:14.506px;line-height:14.506px">85.20 14.68 -8.31</div>
<div class="t" style="left:320.8px;top:133.245px;height:14.506px;line-height:14.506px">6</div>
<div class="t" style="left:406.4px;top:133.245px;height:14.506px;line-height:14.506px">5</div>
<div class="t" style="left:491.68px;top:133.245px;height:14.506px;line-height:14.506px">4</div>
<div class="a" style="left:0;top:147.75px;width:576px;height:14.506px;background:#ebebe9"></div>
<div class="a" style="left:1.6px;top:148.39px;width:83.68px;height:13.706px;background:#eeddf1"></div>
<div class="t" style="left:88px;top:147.75px;height:14.506px;line-height:14.506px">A10</div>
<div class="t" style="left:173.6px;top:147.75px;height:14.506px;line-height:14.506px">89.99 8.31 -7.49</div>
<div class="t" style="left:320.8px;top:147.75px;height:14.506px;line-height:14.506px">6</div>
<div class="t" style="left:406.4px;top:147.75px;height:14.506px;line-height:14.506px">5</div>
<div class="t" style="left:491.68px;top:147.75px;height:14.506px;line-height:14.506px">4</div>
<div class="a" style="left:1.6px;top:162.896px;width:83.68px;height:13.706px;background:#f9df00"></div>
<div class="t" style="left:88px;top:162.256px;height:14.506px;line-height:14.506px">A11</div>
<div class="t" style="left:173.6px;top:162.256px;height:14.506px;line-height:14.506px">88.94 -4.03 92.36</div>
<div class="t" style="left:320.8px;top:162.256px;height:14.506px;line-height:14.506px">5</div>
<div class="t" style="left:406.4px;top:162.256px;height:14.506px;line-height:14.506px">2.5</div>
<div class="t" style="left:491.68px;top:162.256px;height:14.506px;line-height:14.506px">4</div>
<div class="a" style="left:0;top:176.762px;width:576px;height:14.506px;background:#ebebe9"></div>
<div class="a" style="left:1.6px;top:177.402px;width:83.68px;height:13.706px;background:#f7e468"></div>
<div class="t" style="left:88px;top:176.762px;height:14.506px;line-height:14.506px">A12</div>
<div class="t" style="left:173.6px;top:176.762px;height:14.506px;line-height:14.506px">90.41 -4.15 61.47</div>
<div class="t" style="left:320.8px;top:176.762px;height:14.506px;line-height:14.506px">6</div>
<div class="t" style="left:406.4px;top:176.762px;height:14.506px;line-height:14.506px">5</div>
<div class="t" style="left:491.68px;top:176.762px;height:14.506px;line-height:14.506px">4</div>
<div class="a" style="left:1.6px;top:191.907px;width:83.68px;height:13.706px;background:#f4e9ae"></div>
<div class="t" style="left:88px;top:191.267px;height:14.506px;line-height:14.506px">A13</div>
<div class="t" style="left:173.6px;top:191.267px;height:14.506px;line-height:14.506px">92.30 -2.85 30.19</div>
<div class="t" style="left:320.8px;top:191.267px;height:14.506px;line-height:14.506px">6</div>
<div class="t" style="left:406.4px;top:191.267px;height:14.506px;line-height:14.506px">5</div>
<div class="t" style="left:491.68px;top:191.267px;height:14.506px;line-height:14.506px">4</div>
<div class="a" style="left:0;top:205.773px;width:576px;height:14.506px;background:#ebebe9"></div>
<div class="a" style="left:1.6px;top:206.413px;width:83.68px;height:13.706px;background:#f2edd6"></div>
<div class="t" style="left:88px;top:205.773px;height:14.506px;line-height:14.506px">A14</div>
<div class="t" style="left:173.6px;top:205.773px;height:14.506px;line-height:14.506px">93.67 -1.17 11.88</div>
<div class="t" style="left:320.8px;top:205.773px;height:14.506px;line-height:14.506px">6</div>
<div class="t" style="left:406.4px;top:205.773px;height:14.506px;line-height:14.506px">5</div>
<div class="t" style="left:491.68px;top:205.773px;height:14.506px;line-height:14.506px">4</div>
<div class="a" style="left:1.6px;top:220.918px;width:83.68px;height:13.706px;background:#f1efe9"></div>
<div class="t" style="left:88px;top:220.278px;height:14.506px;line-height:14.506px">A15</div>
<div class="t" style="left:173.6px;top:220.278px;height:14.506px;line-height:14.506px">94.36 -0.04 3.13</div>
<div class="t" style="left:320.8px;top:220.278px;height:14.506px;line-height:14.506px">6</div>
<div class="t" style="left:406.4px;top:220.278px;height:14.506px;line-height:14.506px">5</div>
<div class="t" style="left:491.68px;top:220.278px;height:14.506px;line-height:14.506px">4</div>
<div class="a" style="left:0;top:234.784px;width:576px;height:14.506px;background:#ebebe9"></div>
<div class="a" style="left:1.6px;top:235.424px;width:83.68px;height:13.706px;background:#dddeea"></div>
<div class="t" style="left:88px;top:234.784px;height:14.506px;line-height:14.506px">A16</div>
<div class="t" style="left:173.6px;top:234.784px;height:14.506px;line-height:14.506px">88.74 1.17 -5.79</div>
<div class="t" style="left:320.8px;top:234.784px;height:14.506px;line-height:14.506px">6</div>
<div class="t" style="left:406.4px;top:234.784px;height:14.506px;line-height:14.506px">5</div>
<div class="t" style="left:491.68px;top:234.784px;height:14.506px;line-height:14.506px">4</div>
<div class="a" style="left:1.6px;top:249.93px;width:83.68px;height:13.706px;background:#cccdd8"></div>
<div class="t" style="left:88px;top:249.29px;height:14.506px;line-height:14.506px">A17</div>
<div class="t" style="left:173.6px;top:249.29px;height:14.506px;line-height:14.506px">82.69 0.92 -5.55</div>
<div class="t" style="left:320.8px;top:249.29px;height:14.506px;line-height:14.506px">6</div>
<div class="t" style="left:406.4px;top:249.29px;height:14.506px;line-height:14.506px">5</div>
<div class="t" style="left:491.68px;top:249.29px;height:14.506px;line-height:14.506px">4</div>
<div class="a" style="left:0;top:263.795px;width:576px;height:14.506px;background:#ebebe9"></div>
<div class="a" style="left:1.6px;top:264.435px;width:83.68px;height:13.706px;background:#a8aab3"></div>
<div class="t" style="left:88px;top:263.795px;height:14.506px;line-height:14.506px">A18</div>
<div class="t" style="left:173.6px;top:263.795px;height:14.506px;line-height:14.506px">69.74 0.48 -4.87</div>
<div class="t" style="left:320.8px;top:263.795px;height:14.506px;line-height:14.506px">6</div>
<div class="t" style="left:406.4px;top:263.795px;height:14.506px;line-height:14.506px">5</div>
<div class="t" style="left:491.68px;top:263.795px;height:14.506px;line-height:14.506px">4</div>
<div class="a" style="left:1.6px;top:278.941px;width:83.68px;height:13.706px;background:#82848a"></div>
<div class="t" style="left:88px;top:278.301px;height:14.506px;line-height:14.506px">A19</div>
<div class="t" style="left:173.6px;top:278.301px;height:14.506px;line-height:14.506px">55.00 0.34 -3.73</div>
<div class="t" style="left:320.8px;top:278.301px;height:14.506px;line-height:14.506px">6</div>
<div class="t" style="left:406.4px;top:278.301px;height:14.506px;line-height:14.506px">5</div>
<div class="t" style="left:491.68px;top:278.301px;height:14.506px;line-height:14.506px">4</div>
<div class="a" style="left:0;top:292.806px;width:576px;height:14.506px;background:#ebebe9"></div>
<div class="a" style="left:1.6px;top:293.446px;width:83.68px;height:13.706px;background:#56585c"></div>
<div class="t" style="left:88px;top:292.806px;height:14.506px;line-height:14.506px">A20</div>
<div class="t" style="left:173.6px;top:292.806px;height:14.506px;line-height:14.506px">37.36 -0.06 -2.58</div>
<div class="t" style="left:320.8px;top:292.806px;height:14.506px;line-height:14.506px">6</div>
<div class="t" style="left:406.4px;top:292.806px;height:14.506px;line-height:14.506px">5</div>
<div class="t" style="left:491.68px;top:292.806px;height:14.506px;line-height:14.506px">4</div>
<div class="a" style="left:1.6px;top:307.952px;width:83.68px;height:13.706px;background:#282828"></div>
<div class="t" style="left:88px;top:307.312px;height:14.506px;line-height:14.506px">A21</div>
<div class="t" style="left:173.6px;top:307.312px;height:14.506px;line-height:14.506px">16.02 0.03 -0.35</div>
<div class="t" style="left:320.8px;top:307.312px;height:14.506px;line-height:14.506px">6</div>
<div class="t" style="left:406.4px;top:307.312px;height:14.506px;line-height:14.506px">2.5</div>
<div class="t" style="left:491.68px;top:307.312px;height:14.506px;line-height:14.506px">4</div>
<div class="a" style="left:0;top:321.818px;width:576px;height:14.506px;background:#ebebe9"></div>
<div class="a" style="left:1.6px;top:322.458px;width:83.68px;height:13.706px;background:#2f1d1c"></div>
<div class="t" style="left:88px;top:321.818px;height:14.506px;line-height:14.506px">A22</div>
<div class="t" style="left:173.6px;top:321.818px;height:14.506px;line-height:14.506px">13.28 8.92 4.37</div>
<div class="t" style="left:320.8px;top:321.818px;height:14.506px;line-height:14.506px">6</div>
<div class="t" style="left:406.4px;top:321.818px;height:14.506px;line-height:14.506px">5</div>
<div class="t" style="left:491.68px;top:321.818px;height:14.506px;line-height:14.506px">4</div>
<div class="a" style="left:1.6px;top:336.963px;width:83.68px;height:13.706px;background:#793c30"></div>
<div class="t" style="left:88px;top:336.323px;height:14.506px;line-height:14.506px">A23</div>
<div class="t" style="left:173.6px;top:336.323px;height:14.506px;line-height:14.506px">33.35 25.98 20.16</div>
<div class="t" style="left:320.8px;top:336.323px;height:14.506px;line-height:14.506px">6</div>
<div class="t" style="left:406.4px;top:336.323px;height:14.506px;line-height:14.506px">5</div>
<div class="t" style="left:491.68px;top:336.323px;height:14.506px;line-height:14.506px">4</div>
<div class="a" style="left:0;top:350.829px;width:576px;height:14.506px;background:#ebebe9"></div>
<div class="a" style="left:1.6px;top:351.469px;width:83.68px;height:13.706px;background:#55522f"></div>
<div class="t" style="left:88px;top:350.829px;height:14.506px;line-height:14.506px">A24</div>
<div class="t" style="left:173.6px;top:350.829px;height:14.506px;line-height:14.506px">34.53 -3.22 21.13</div>
<div class="t" style="left:320.8px;top:350.829px;height:14.506px;line-height:14.506px">6</div>
<div class="t" style="left:406.4px;top:350.829px;height:14.506px;line-height:14.506px">5</div>
<div class="t" style="left:491.68px;top:350.829px;height:14.506px;line-height:14.506px">4</div>
<div class="a" style="left:1.6px;top:365.974px;width:83.68px;height:13.706px;background:#323184"></div>
<div class="t" style="left:88px;top:365.334px;height:14.506px;line-height:14.506px">B01</div>
<div class="t" style="left:173.6px;top:365.334px;height:14.506px;line-height:14.506px">24.74 21.12 -47.46</div>
<div class="t" style="left:320.8px;top:365.334px;height:14.506px;line-height:14.506px">6</div>
<div class="t" style="left:406.4px;top:365.334px;height:14.506px;line-height:14.506px">5</div>
<div class="t" style="left:491.68px;top:365.334px;height:14.506px;line-height:14.506px">4</div>
<div class="a" style="left:0;top:379.84px;width:576px;height:14.506px;background:#ebebe9"></div>
<div class="a" style="left:1.6px;top:380.48px;width:83.68px;height:13.706px;background:#5f569e"></div>
<div class="t" style="left:88px;top:379.84px;height:14.506px;line-height:14.506px">B02</div>
<div class="t" style="left:173.6px;top:379.84px;height:14.506px;line-height:14.506px">40.01 18.01 -38.65</div>
<div class="t" style="left:320.8px;top:379.84px;height:14.506px;line-height:14.506px">6</div>
<div class="t" style="left:406.4px;top:379.84px;height:14.506px;line-height:14.506px">5</div>
<div class="t" style="left:491.68px;top:379.84px;height:14.506px;line-height:14.506px">4</div>
<div class="a" style="left:1.6px;top:394.986px;width:83.68px;height:13.706px;background:#9991c5"></div>
<div class="t" style="left:88px;top:394.346px;height:14.506px;line-height:14.506px">B03</div>
<div class="t" style="left:173.6px;top:394.346px;height:14.506px;line-height:14.506px">62.24 11.37 -26.08</div>
<div class="t" style="left:320.8px;top:394.346px;height:14.506px;line-height:14.506px">6</div>
<div class="t" style="left:406.4px;top:394.346px;height:14.506px;line-height:14.506px">5</div>
<div class="t" style="left:491.68px;top:394.346px;height:14.506px;line-height:14.506px">4</div>
<div class="a" style="left:0;top:408.851px;width:576px;height:14.506px;background:#ebebe9"></div>
<div class="a" style="left:1.6px;top:409.491px;width:83.68px;height:13.706px;background:#c2bee1"></div>
<div class="t" style="left:88px;top:408.851px;height:14.506px;line-height:14.506px">B04</div>
<div class="t" style="left:173.6px;top:408.851px;height:14.506px;line-height:14.506px">78.13 6.82 -17.11</div>
<div class="t" style="left:320.8px;top:408.851px;height:14.506px;line-height:14.506px">6</div>
<div class="t" style="left:406.4px;top:408.851px;height:14.506px;line-height:14.506px">5</div>
<div class="t" style="left:491.68px;top:408.851px;height:14.506px;line-height:14.506px">4</div>
<div class="a" style="left:1.6px;top:423.997px;width:83.68px;height:13.706px;background:#d8d6ef"></div>
<div class="t" style="left:88px;top:423.357px;height:14.506px;line-height:14.506px">B05</div>
<div class="t" style="left:173.6px;top:423.357px;height:14.506px;line-height:14.506px">86.29 4.25 -12.10</div>
<div class="t" style="left:320.8px;top:423.357px;height:14.506px;line-height:14.506px">6</div>
<div class="t" style="left:406.4px;top:423.357px;height:14.506px;line-height:14.506px">5</div>
<div class="t" style="left:491.68px;top:423.357px;height:14.506px;line-height:14.506px">4</div>
<div class="a" style="left:0;top:437.862px;width:576px;height:14.506px;background:#ebebe9"></div>
<div class="a" style="left:1.6px;top:438.502px;width:83.68px;height:13.706px;background:#db1d2a"></div>
<div class="t" style="left:88px;top:437.862px;height:14.506px;line-height:14.506px">B06</div>
<div class="t" style="left:173.6px;top:437.862px;height:14.506px;line-height:14.506px">47.99 69.33 45.86</div>
<div class="t" style="left:320.8px;top:437.862px;height:14.506px;line-height:14.506px">6</div>
<div class="t" style="left:406.4px;top:437.862px;height:14.506px;line-height:14.506px">5</div>
<div class="t" style="left:491.68px;top:437.862px;height:14.506px;line-height:14.506px">4</div>
<div class="a" style="left:1.6px;top:453.008px;width:83.68px;height:13.706px;background:#e2634f"></div>
<div class="t" style="left:88px;top:452.368px;height:14.506px;line-height:14.506px">B07</div>
<div class="t" style="left:173.6px;top:452.368px;height:14.506px;line-height:14.506px">58.35 49.37 36.88</div>
<div class="t" style="left:320.8px;top:452.368px;height:14.506px;line-height:14.506px">6</div>
<div class="t" style="left:406.4px;top:452.368px;height:14.506px;line-height:14.506px">5</div>
<div class="t" style="left:491.68px;top:452.368px;height:14.506px;line-height:14.506px">4</div>
<div class="a" style="left:0;top:466.874px;width:576px;height:14.506px;background:#ebebe9"></div>
<div class="a" style="left:1.6px;top:467.514px;width:83.68px;height:13.706px;background:#e9a290"></div>
<div class="t" style="left:88px;top:466.874px;height:14.506px;line-height:14.506px">B08</div>
<div class="t" style="left:173.6px;top:466.874px;height:14.506px;line-height:14.506px">73.41 25.28 20.41</div>
<div class="t" style="left:320.8px;top:466.874px;height:14.506px;line-height:14.506px">6</div>
<div class="t" style="left:406.4px;top:466.874px;height:14.506px;line-height:14.506px">5</div>
<div class="t" style="left:491.68px;top:466.874px;height:14.506px;line-height:14.506px">4</div>
<div class="a" style="left:1.6px;top:482.019px;width:83.68px;height:13.706px;background:#edc9c2"></div>
<div class="t" style="left:88px;top:481.379px;height:14.506px;line-height:14.506px">B09</div>
<div class="t" style="left:173.6px;top:481.379px;height:14.506px;line-height:14.506px">83.99 12.39 8.26</div>
<div class="t" style="left:320.8px;top:481.379px;height:14.506px;line-height:14.506px">6</div>
<div class="t" style="left:406.4px;top:481.379px;height:14.506px;line-height:14.506px">5</div>
<div class="t" style="left:491.68px;top:481.379px;height:14.506px;line-height:14.506px">4</div>
<div class="a" style="left:0;top:495.885px;width:576px;height:14.506px;background:#ebebe9"></div>
<div class="a" style="left:1.6px;top:496.525px;width:83.68px;height:13.706px;background:#efdcde"></div>
<div class="t" style="left:88px;top:495.885px;height:14.506px;line-height:14.506px">B10</div>
<div class="t" style="left:173.6px;top:495.885px;height:14.506px;line-height:14.506px">89.38 6.84 1.42</div>
<div class="t" style="left:320.8px;top:495.885px;height:14.506px;line-height:14.506px">6</div>
<div class="t" style="left:406.4px;top:495.885px;height:14.506px;line-height:14.506px">5</div>
<div class="t" style="left:491.68px;top:495.885px;height:14.506px;line-height:14.506px">4</div>
<div class="a" style="left:1.6px;top:511.03px;width:83.68px;height:13.706px;background:#008e48"></div>
<div class="t" style="left:88px;top:510.39px;height:14.506px;line-height:14.506px">B11</div>
<div class="t" style="left:173.6px;top:510.39px;height:14.506px;line-height:14.506px">49.45 -65.93 24.33</div>
<div class="t" style="left:320.8px;top:510.39px;height:14.506px;line-height:14.506px">6</div>
<div class="t" style="left:406.4px;top:510.39px;height:14.506px;line-height:14.506px">5</div>
<div class="t" style="left:491.68px;top:510.39px;height:14.506px;line-height:14.506px">4</div>
<div class="a" style="left:0;top:524.896px;width:576px;height:14.506px;background:#ebebe9"></div>
<div class="a" style="left:1.6px;top:525.536px;width:83.68px;height:13.706px;background:#3fa670"></div>
<div class="t" style="left:88px;top:524.896px;height:14.506px;line-height:14.506px">B12</div>
<div class="t" style="left:173.6px;top:524.896px;height:14.506px;line-height:14.506px">61.22 -40.72 18.71</div>
<div class="t" style="left:320.8px;top:524.896px;height:14.506px;line-height:14.506px">6</div>
<div class="t" style="left:406.4px;top:524.896px;height:14.506px;line-height:14.506px">5</div>
<div class="t" style="left:491.68px;top:524.896px;height:14.506px;line-height:14.506px">4</div>
</div>
<div class="a" style="left:676.8px;top:656px;width:576px;height:11.68px;background:#e8e8e8;border-bottom:1px solid #d4d4d4"></div>
<div class="a" style="left:688.8px;top:656.48px;width:534.4px;height:11.04px;background:#fafafa;border-left:1px solid #e4e4e4"></div>
<svg class="a" style="left:681.28px;top:658.72px" width="4.160" height="6.400" viewBox="0 0 2.6 4"><path d="M2.6 0 L0 2 L2.6 4 Z" fill="#444"/></svg>
<div class="t" style="left:681.28px;top:670.4px">72 items</div>
</div></body></html>
